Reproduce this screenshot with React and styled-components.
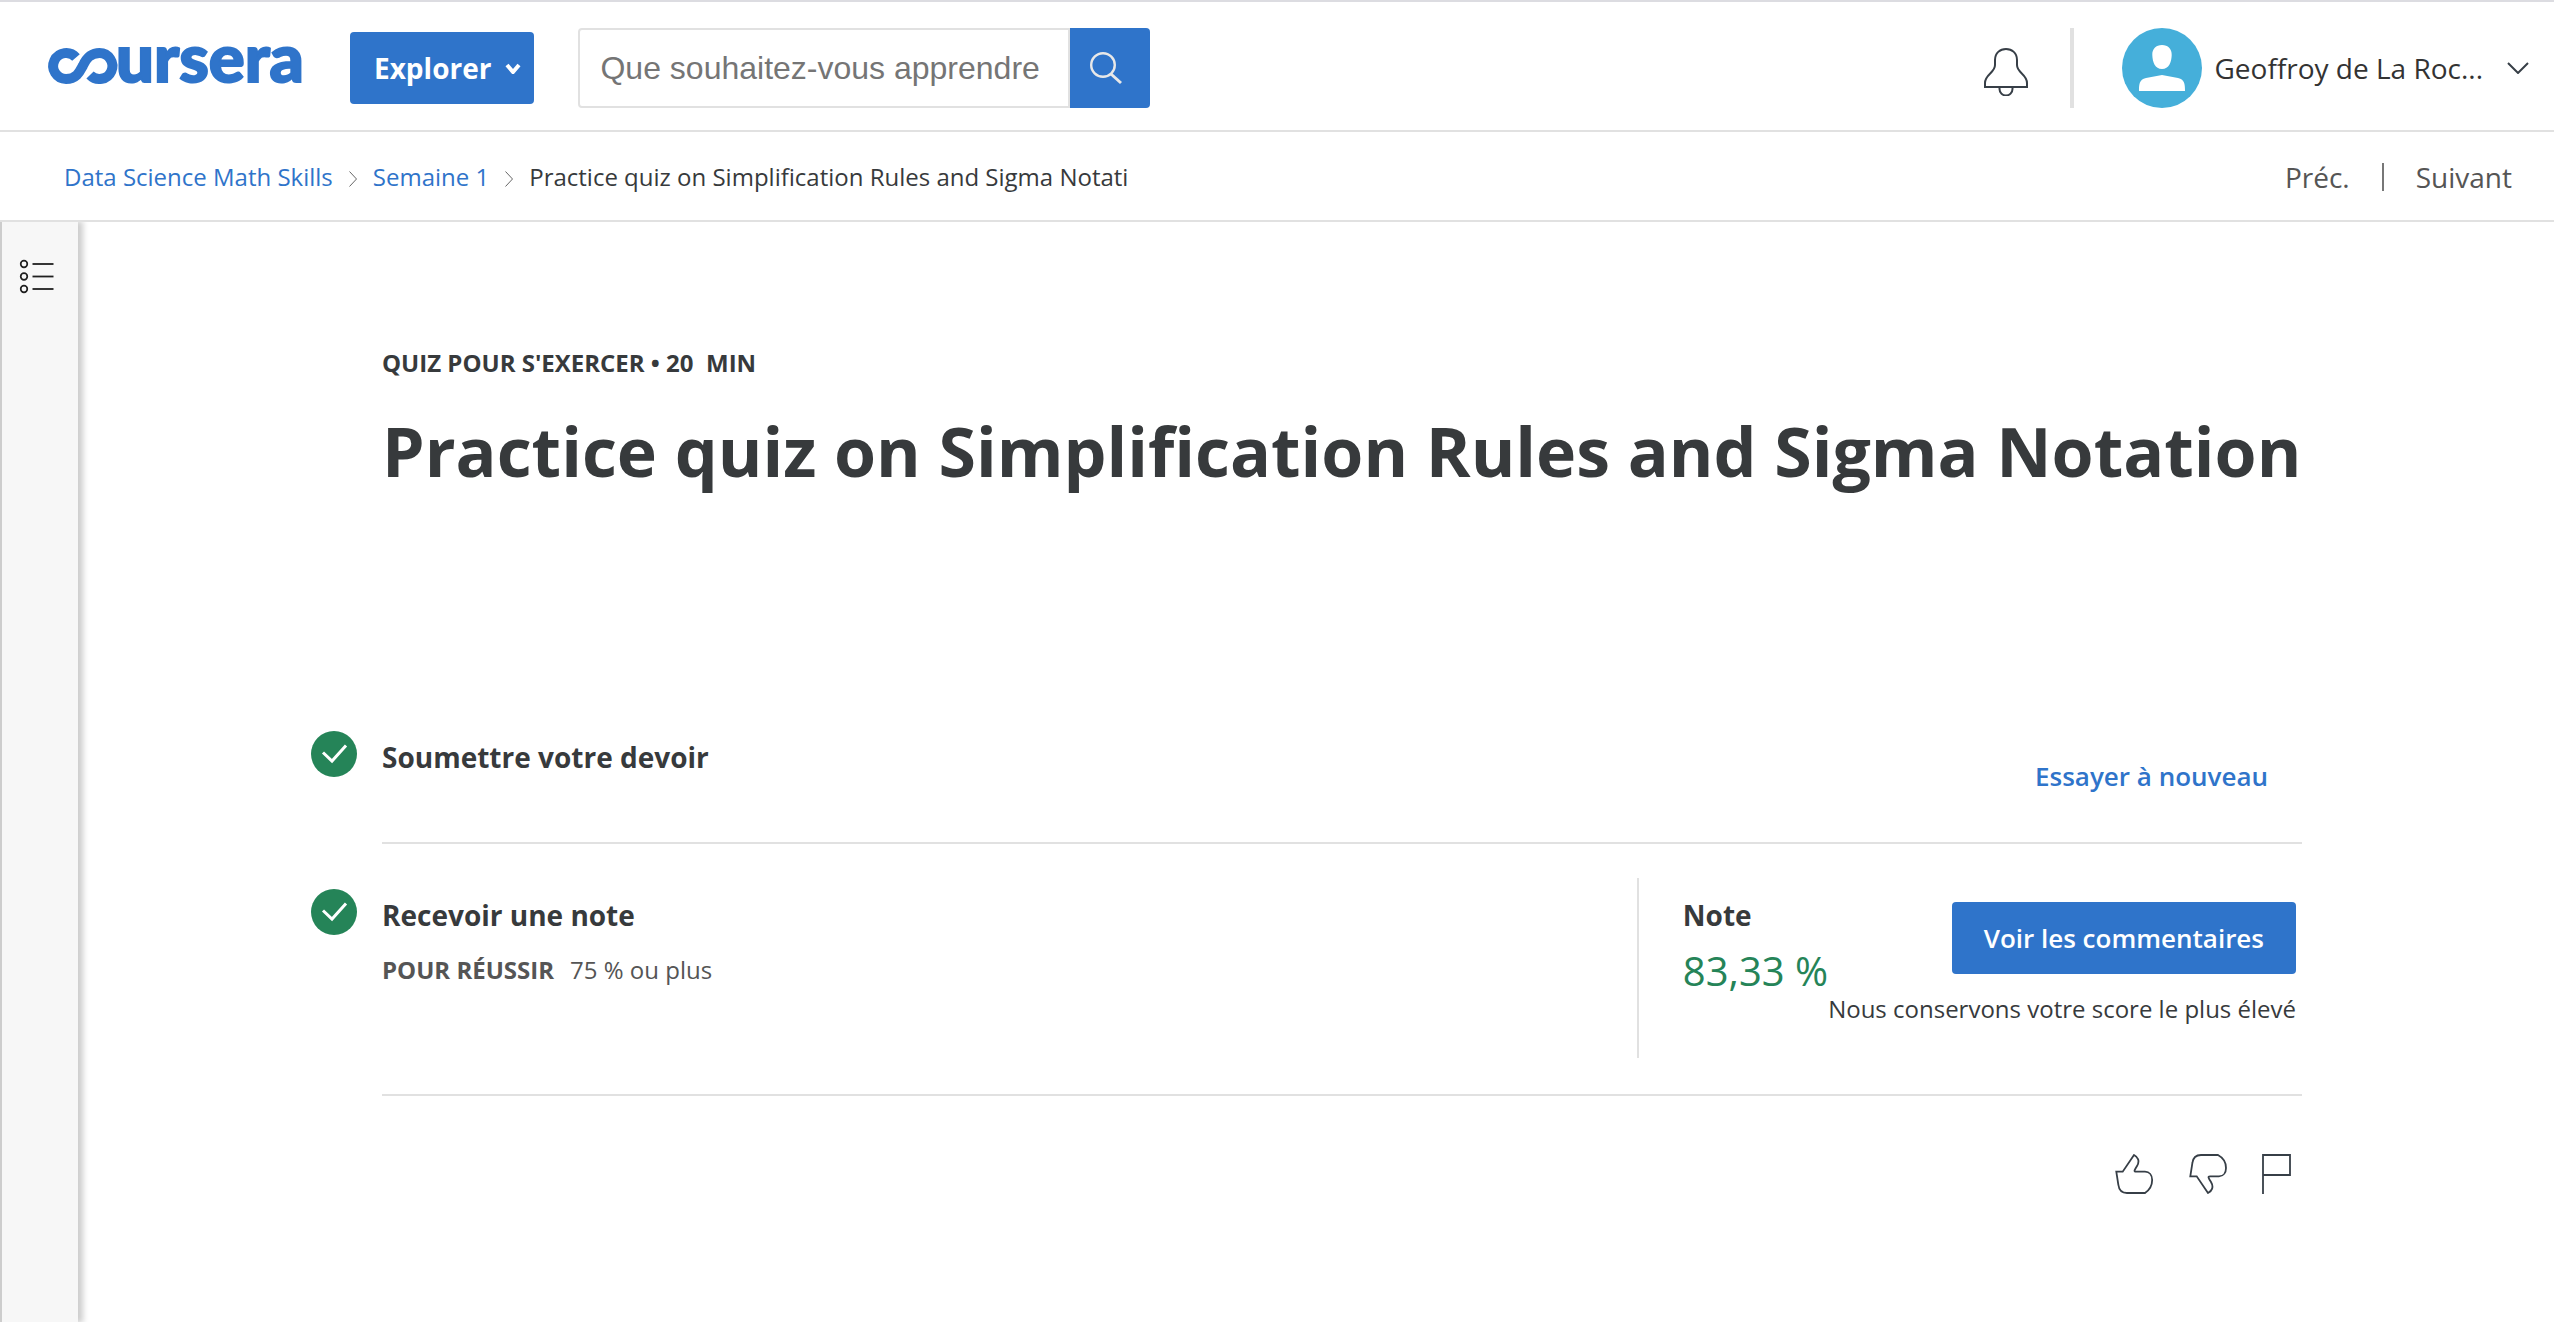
import React from "react";
import styled, { createGlobalStyle } from "styled-components";

const c = {
  blue: "#2f74ca",
  green: "#258458",
  ink: "#373a3c",
  grey: "#555",
  line: "#e1e1e1",
};

const GlobalStyle = createGlobalStyle`
  *, *::before, *::after { box-sizing: border-box; }
  body {
    margin: 0;
    background: #fff;
    color: ${c.ink};
    font-family: "Open Sans", "Noto Sans", sans-serif;
    font-size: 24px;
    line-height: 36px;
  }
  button, input { font: inherit; color: inherit; margin: 0; }
  h1, h2, p, ol, ul { margin: 0; padding: 0; list-style: none; }
  svg { display: block; flex: none; }
`;

const Page = styled.div`
  min-height: 100vh;
  display: flex;
  flex-direction: column;
`;

const Header = styled.header`
  display: flex;
  align-items: center;
  border-top: 2px solid #dcdce1;
  border-bottom: 2px solid ${c.line};
  padding: 26px 25px 22px 44px;
`;

const LogoMark = styled.svg`
  overflow: visible;
`;

const PlainButton = styled.button`
  display: flex;
  align-items: center;
  padding: 0;
  border: 0;
  background: none;
  cursor: pointer;
`;

const SolidButton = styled(PlainButton)`
  justify-content: center;
  height: 72px;
  padding: ${(p) => p.$pad};
  border-radius: 4px;
  background: ${c.blue};
  color: #fff;
  font-size: ${(p) => p.$size};
  font-weight: ${(p) => p.$weight};
`;

const ExploreButton = styled(SolidButton)`
  gap: 14px;
  margin: 0 44px 0 46px;
`;

const SearchForm = styled.form`
  display: flex;
  width: 572px;
  height: 80px;
`;

const SearchInput = styled.input`
  flex: 1;
  min-width: 0;
  padding: 0 20px;
  border: 2px solid ${c.line};
  border-radius: 4px 0 0 4px;
  outline: 0;
  font-family: "Liberation Sans", Arial, sans-serif;
  font-size: 32px;
  &::placeholder { color: #757575; opacity: 1; }
`;

const SearchButton = styled(PlainButton)`
  width: 80px;
  padding-left: 20px;
  background: ${c.blue};
  border-radius: 0 4px 4px 0;
`;

const Account = styled.div`
  display: flex;
  align-items: center;
  margin-left: auto;
`;

const AccountDivider = styled.span`
  width: 4px;
  height: 80px;
  margin: 0 48px 0 42px;
  background: ${c.line};
`;

const ProfileButton = styled(PlainButton)`
  gap: 12px;
  color: #333;
  font-size: 28px;
  line-height: 40px;
`;

const ProfileName = styled.span`
  margin-right: 12px;
`;

const SubNav = styled.nav`
  display: flex;
  align-items: center;
  justify-content: space-between;
  height: 90px;
  padding: 2px 42px 0 64px;
  border-bottom: 2px solid ${c.line};
`;

const Crumbs = styled.ol`
  display: flex;
  align-items: center;
`;

const Crumb = styled.li`
  display: flex;
  align-items: center;
  & > svg { margin: 4px 16px 0; }
`;

const Link = styled.a`
  color: ${c.blue};
  text-decoration: none;
`;

const Pager = styled.div`
  display: flex;
  align-items: center;
  font-size: 28px;
  line-height: 40px;
`;

const PagerLink = styled(Link)`
  color: ${c.grey};
  & + & {
    display: flex;
    align-items: center;
  }
  & + &::before {
    content: "";
    width: 2px;
    height: 28px;
    margin: 0 32px;
    background: #777;
  }
`;

const Body = styled.div`
  flex: 1;
  display: flex;
`;

const Sidebar = styled.aside`
  width: 78px;
  padding: 36px 0 0 16px;
  border-left: 2px solid #cdcdcd;
  background: #f7f7f7;
  box-shadow: 4px 0 6px 1px rgba(0, 0, 0, 0.2);
  clip-path: inset(0 -16px 0 0);
`;

const Main = styled.main`
  flex: 1;
  padding: 123px 24px 0 76px;
`;

const Column = styled.div`
  max-width: 1920px;
  margin: 0 auto;
`;

const Kicker = styled.p`
  font-weight: 700;
  white-space: pre;
`;

const Title = styled.h1`
  margin: 24px 0 189px;
  font-size: 68px;
  line-height: 92px;
  font-weight: 700;
  white-space: nowrap;
`;

const Step = styled.li`
  display: grid;
  grid-template-columns: 71px 1fr;
  margin-left: -71px;
  & > svg { margin-top: 45px; }
`;

const StepBody = styled.div`
  display: flex;
  justify-content: space-between;
  align-items: flex-start;
  border-bottom: 2px solid ${c.line};
`;

const StepInfo = styled.div`
  padding-top: 51px;
`;

const Heading = styled.h2`
  font-size: 28px;
  line-height: 40px;
  font-weight: 700;
`;

const Requirement = styled.p`
  display: flex;
  gap: 16px;
  margin-top: 17px;
  color: ${c.grey};
`;

const RetryButton = styled(PlainButton)`
  margin: 72px 34px 48px;
  color: ${c.blue};
  font-size: 26px;
  line-height: 36px;
  font-weight: 600;
`;

const GradePanel = styled.div`
  display: flex;
  margin: 34px 0 36px;
  padding: 0 6px 31px 44px;
  border-left: 2px solid ${c.line};
`;

const Grade = styled.div`
  padding-top: 17px;
`;

const Score = styled.p`
  margin-top: 9px;
  color: ${c.green};
  font-size: 40px;
  line-height: 54px;
`;

const GradeActions = styled.div`
  display: flex;
  flex-direction: column;
  align-items: flex-end;
  gap: 17px;
  padding-top: 24px;
`;

const Feedback = styled.div`
  display: flex;
  justify-content: flex-end;
  gap: 34px;
  padding: 58px 10px 0 0;
`;

function Logo() {
  return (
    <LogoMark width="260" height="80" viewBox="0 -16 260 80" role="img" aria-label="coursera">
      <path
        d="M32 13.500 A13 13 0 1 0 22 35 C33 35 36 27 39 21.500 C42 15 46 9 55.500 9 A13 13 0 1 1 46 31"
        fill="none"
        stroke={c.blue}
        strokeWidth="10"
      />
      <text
        x="72"
        y="38"
        fill={c.blue}
        stroke={c.blue}
        strokeWidth="2"
        fontFamily="Lato, sans-serif"
        fontWeight="900"
        fontSize="67"
      >
        ursera
      </text>
    </LogoMark>
  );
}

function Chevron({ width, height, stroke, weight, right }) {
  const w = weight / 2;
  const d = right
    ? `M${w} ${w} L${width - w} ${height / 2} L${w} ${height - w}`
    : `M${w} ${w} L${width / 2} ${height - w} L${width - w} ${w}`;
  return (
    <svg width={width} height={height} viewBox={`0 0 ${width} ${height}`} aria-hidden="true">
      <path d={d} fill="none" stroke={stroke} strokeWidth={weight} />
    </svg>
  );
}

function SearchIcon() {
  return (
    <svg width="34" height="34" viewBox="0 0 34 34" fill="none" stroke="#e8e8e8" strokeWidth="2.400" aria-hidden="true">
      <circle cx="13" cy="14" r="11.800" />
      <path d="M21 23 L31 32" strokeWidth="3" />
    </svg>
  );
}

function BellIcon() {
  return (
    <svg width="44" height="56" viewBox="0 -8 44 56" fill="none" stroke="#373f47" strokeWidth="2" aria-hidden="true">
      <path d="M1 39 V35 C1 26 11 25 11 17 V12 C11 5 16 1 22 1 S33 5 33 12 V17 C33 25 43 26 43 35 V39 Z" />
      <path d="M15.500 39 V41 A6.500 6.500 0 0 0 28.500 41 V39" />
    </svg>
  );
}

function Avatar() {
  return (
    <svg width="80" height="80" viewBox="0 0 80 80" aria-hidden="true">
      <circle cx="40" cy="40" r="40" fill="#45afda" />
      <path
        d="M40 17 C46 17 50 21 49.700 27 C49.500 34 47 41 40 41 S30.500 34 30.300 27 C30 21 34 17 40 17 Z M17 63 C17 57 17 51.500 24 50 L40 47 L56 50 C63 51.500 63 57 63 63 Z"
        fill="#fff"
      />
    </svg>
  );
}

function ListIcon() {
  return (
    <svg width="40" height="40" viewBox="0 0 40 40" fill="none" stroke="#1f1f1f" aria-hidden="true">
      {[6, 18.5, 31].map((y) => (
        <g key={y}>
          <circle cx="6" cy={y} r="3.300" strokeWidth="1.700" />
          <path d={`M14.500 ${y} H35.500`} strokeWidth="1.800" />
        </g>
      ))}
    </svg>
  );
}

function CheckIcon() {
  return (
    <svg width="46" height="46" viewBox="0 0 46 46" aria-hidden="true">
      <circle cx="23" cy="23" r="23" fill={c.green} />
      <path d="M12 21.500 L21 30 L35 14.500" fill="none" stroke="#fff" strokeWidth="3" />
    </svg>
  );
}

const feedbackActions = [
  {
    label: "J'aime",
    width: 40,
    d: "M2.300 17.700 H8.700 L20 1 C24 3 26 7 23 12 C20.500 16 19.500 17.700 22 17.700 H31 C40 17.700 41 32 31 39 H13 C8 39 5 36 4.400 31 Z",
  },
  {
    label: "Je n'aime pas",
    width: 40,
    d: "M2.300 22.300 H8.700 L20 39 C24 37 26 33 23 28 C20.500 24 19.500 22.300 22 22.300 H31 C40 22.300 41 7 30 1 H13 C8 1 5 4 4.400 9 Z",
  },
  { label: "Signaler", width: 30, d: "M1 40 V1 H28 V21 H1" },
];

export default function App() {
  return (
    <Page>
      <GlobalStyle />
      <Header>
        <Logo />
        <ExploreButton type="button" $size="28px" $weight="700" $pad="0 13px 0 24px">
          Explorer
          <Chevron width={16} height={11} stroke="#fff" weight={4} />
        </ExploreButton>
        <SearchForm role="search">
          <SearchInput type="text" aria-label="Rechercher" placeholder="Que souhaitez-vous apprendre" />
          <SearchButton type="button" aria-label="Lancer la recherche">
            <SearchIcon />
          </SearchButton>
        </SearchForm>
        <Account>
          <PlainButton type="button" aria-label="Notifications">
            <BellIcon />
          </PlainButton>
          <AccountDivider />
          <ProfileButton type="button">
            <Avatar />
            <ProfileName>Geoffroy de La Roc...</ProfileName>
            <Chevron width={22} height={12} stroke="#373f47" weight={2} />
          </ProfileButton>
        </Account>
      </Header>

      <SubNav aria-label="Fil d'Ariane">
        <Crumbs>
          <Crumb>
            <Link href="#cours">Data Science Math Skills</Link>
            <Chevron width={8} height={16} stroke="#666" weight={1} right />
          </Crumb>
          <Crumb>
            <Link href="#semaine">Semaine 1</Link>
            <Chevron width={8} height={16} stroke="#666" weight={1} right />
          </Crumb>
          <Crumb>Practice quiz on Simplification Rules and Sigma Notati</Crumb>
        </Crumbs>
        <Pager>
          <PagerLink href="#prec">Préc.</PagerLink>
          <PagerLink href="#suivant">Suivant</PagerLink>
        </Pager>
      </SubNav>

      <Body>
        <Sidebar>
          <PlainButton type="button" aria-label="Plan du cours">
            <ListIcon />
          </PlainButton>
        </Sidebar>
        <Main>
          <Column>
            <Kicker>{"QUIZ POUR S'EXERCER • 20  MIN"}</Kicker>
            <Title>Practice quiz on Simplification Rules and Sigma Notation</Title>
            <ul>
              <Step>
                <CheckIcon />
                <StepBody>
                  <StepInfo>
                    <Heading>Soumettre votre devoir</Heading>
                  </StepInfo>
                  <RetryButton type="button">Essayer à nouveau</RetryButton>
                </StepBody>
              </Step>
              <Step>
                <CheckIcon />
                <StepBody>
                  <StepInfo>
                    <Heading>Recevoir une note</Heading>
                    <Requirement>
                      <strong>POUR RÉUSSIR</strong>
                      <span>75 % ou plus</span>
                    </Requirement>
                  </StepInfo>
                  <GradePanel>
                    <Grade>
                      <Heading>Note</Heading>
                      <Score>83,33 %</Score>
                    </Grade>
                    <GradeActions>
                      <SolidButton type="button" $size="26px" $weight="600" $pad="0 32px">
                        Voir les commentaires
                      </SolidButton>
                      <p>Nous conservons votre score le plus élevé</p>
                    </GradeActions>
                  </GradePanel>
                </StepBody>
              </Step>
            </ul>
            <Feedback>
              {feedbackActions.map((a) => (
                <PlainButton key={a.label} type="button" aria-label={a.label}>
                  <svg width={a.width} height="40" viewBox={`0 0 ${a.width} 40`} fill="none" stroke="#373f47" strokeWidth="1.800">
                    <path d={a.d} />
                  </svg>
                </PlainButton>
              ))}
            </Feedback>
          </Column>
        </Main>
      </Body>
    </Page>
  );
}
